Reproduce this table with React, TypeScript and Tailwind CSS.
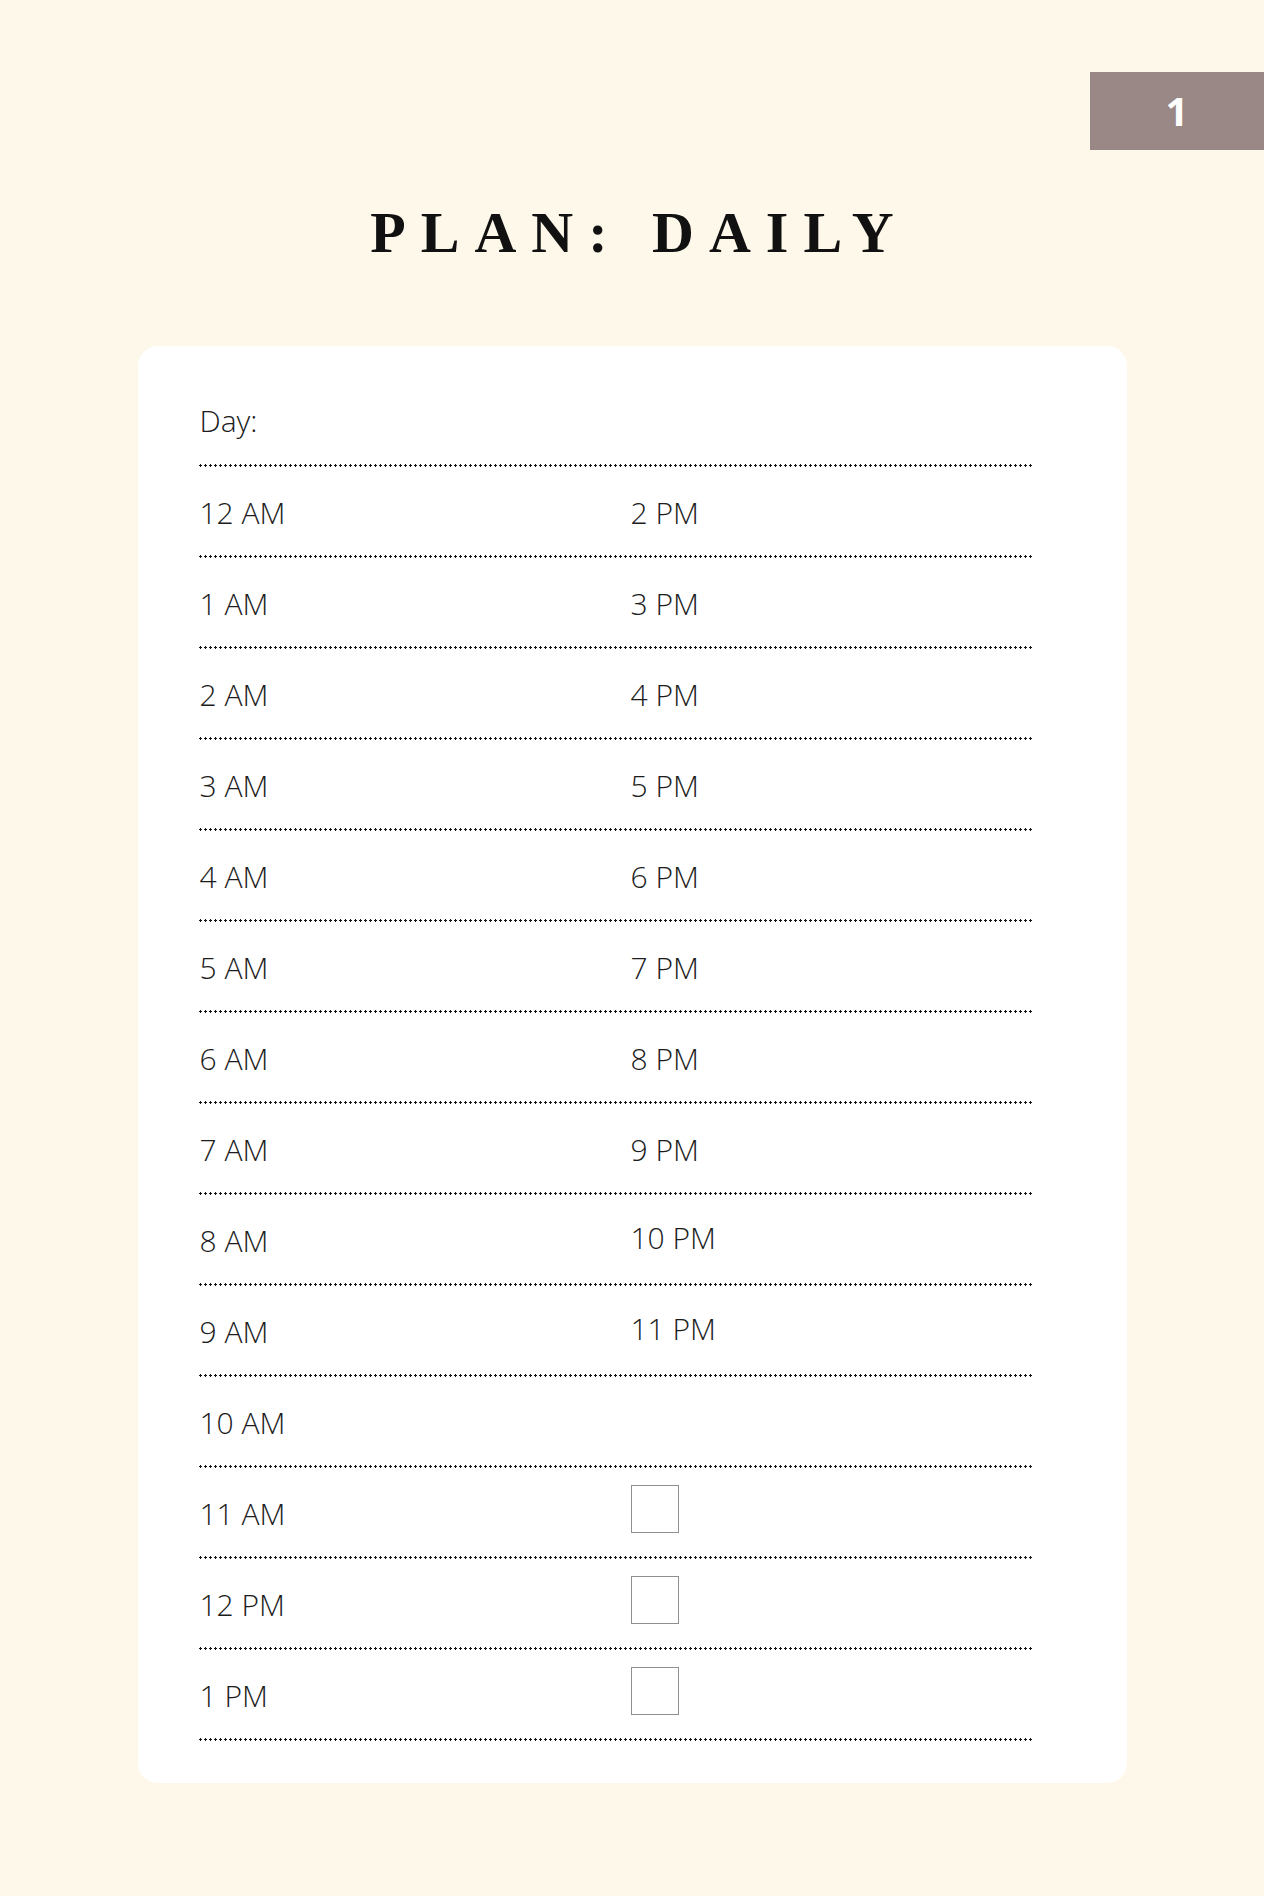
const rows: { am: string; pm?: string; box?: boolean; lift?: boolean }[] = [
  { am: "12 AM", pm: "2 PM" },
  { am: "1 AM", pm: "3 PM" },
  { am: "2 AM", pm: "4 PM" },
  { am: "3 AM", pm: "5 PM" },
  { am: "4 AM", pm: "6 PM" },
  { am: "5 AM", pm: "7 PM" },
  { am: "6 AM", pm: "8 PM" },
  { am: "7 AM", pm: "9 PM" },
  { am: "8 AM", pm: "10 PM", lift: true },
  { am: "9 AM", pm: "11 PM", lift: true },
  { am: "10 AM" },
  { am: "11 AM", box: true },
  { am: "12 PM", box: true },
  { am: "1 PM", box: true },
];

function Dots() {
  return (
    <div className="h-[3px] w-full bg-[radial-gradient(circle,#161616_1px,transparent_1.4px)] bg-[length:5px_3px]" />
  );
}

export default function App() {
  return (
    <div className="min-h-[1896px] bg-[#fef8eb] font-['Open_Sans',sans-serif] text-[#1c1c1c]">
      {/* page number tab */}
      <div className="flex justify-end pt-[72px]">
        <div className="flex h-[78px] w-[174px] items-center justify-center bg-[#9a8886] text-[40px] font-bold leading-none text-white">
          1
        </div>
      </div>

      <h1 className="mt-[54px] pl-[15px] text-center font-['Liberation_Serif',serif] text-[58px] font-bold leading-none tracking-[15px] text-[#111]">
        PLAN: DAILY
      </h1>

      <div className="mx-auto mt-[84px] w-[989px] rounded-[20px] bg-white pb-[42px] pl-[60px] pr-[95px] pt-[30px]">
        <div className="flex h-[88px] items-center pl-[2px] pt-[2px] text-[30px] font-light leading-none">Day:</div>
        <Dots />

        {rows.map((r) => (
          <div key={r.am}>
            <div className="flex h-[88px] items-center pt-[3px] text-[30px] font-light leading-none">
              <div className="w-[433px] pl-[2px]">{r.am}</div>
              {r.pm && <div className={r.lift ? "pb-[6px]" : ""}>{r.pm}</div>}
              {r.box && <div className="mb-[9px] h-[48px] w-[48px] border-[1.5px] border-[#8f8f8f]" />}
            </div>
            <Dots />
          </div>
        ))}
      </div>
    </div>
  );
}
